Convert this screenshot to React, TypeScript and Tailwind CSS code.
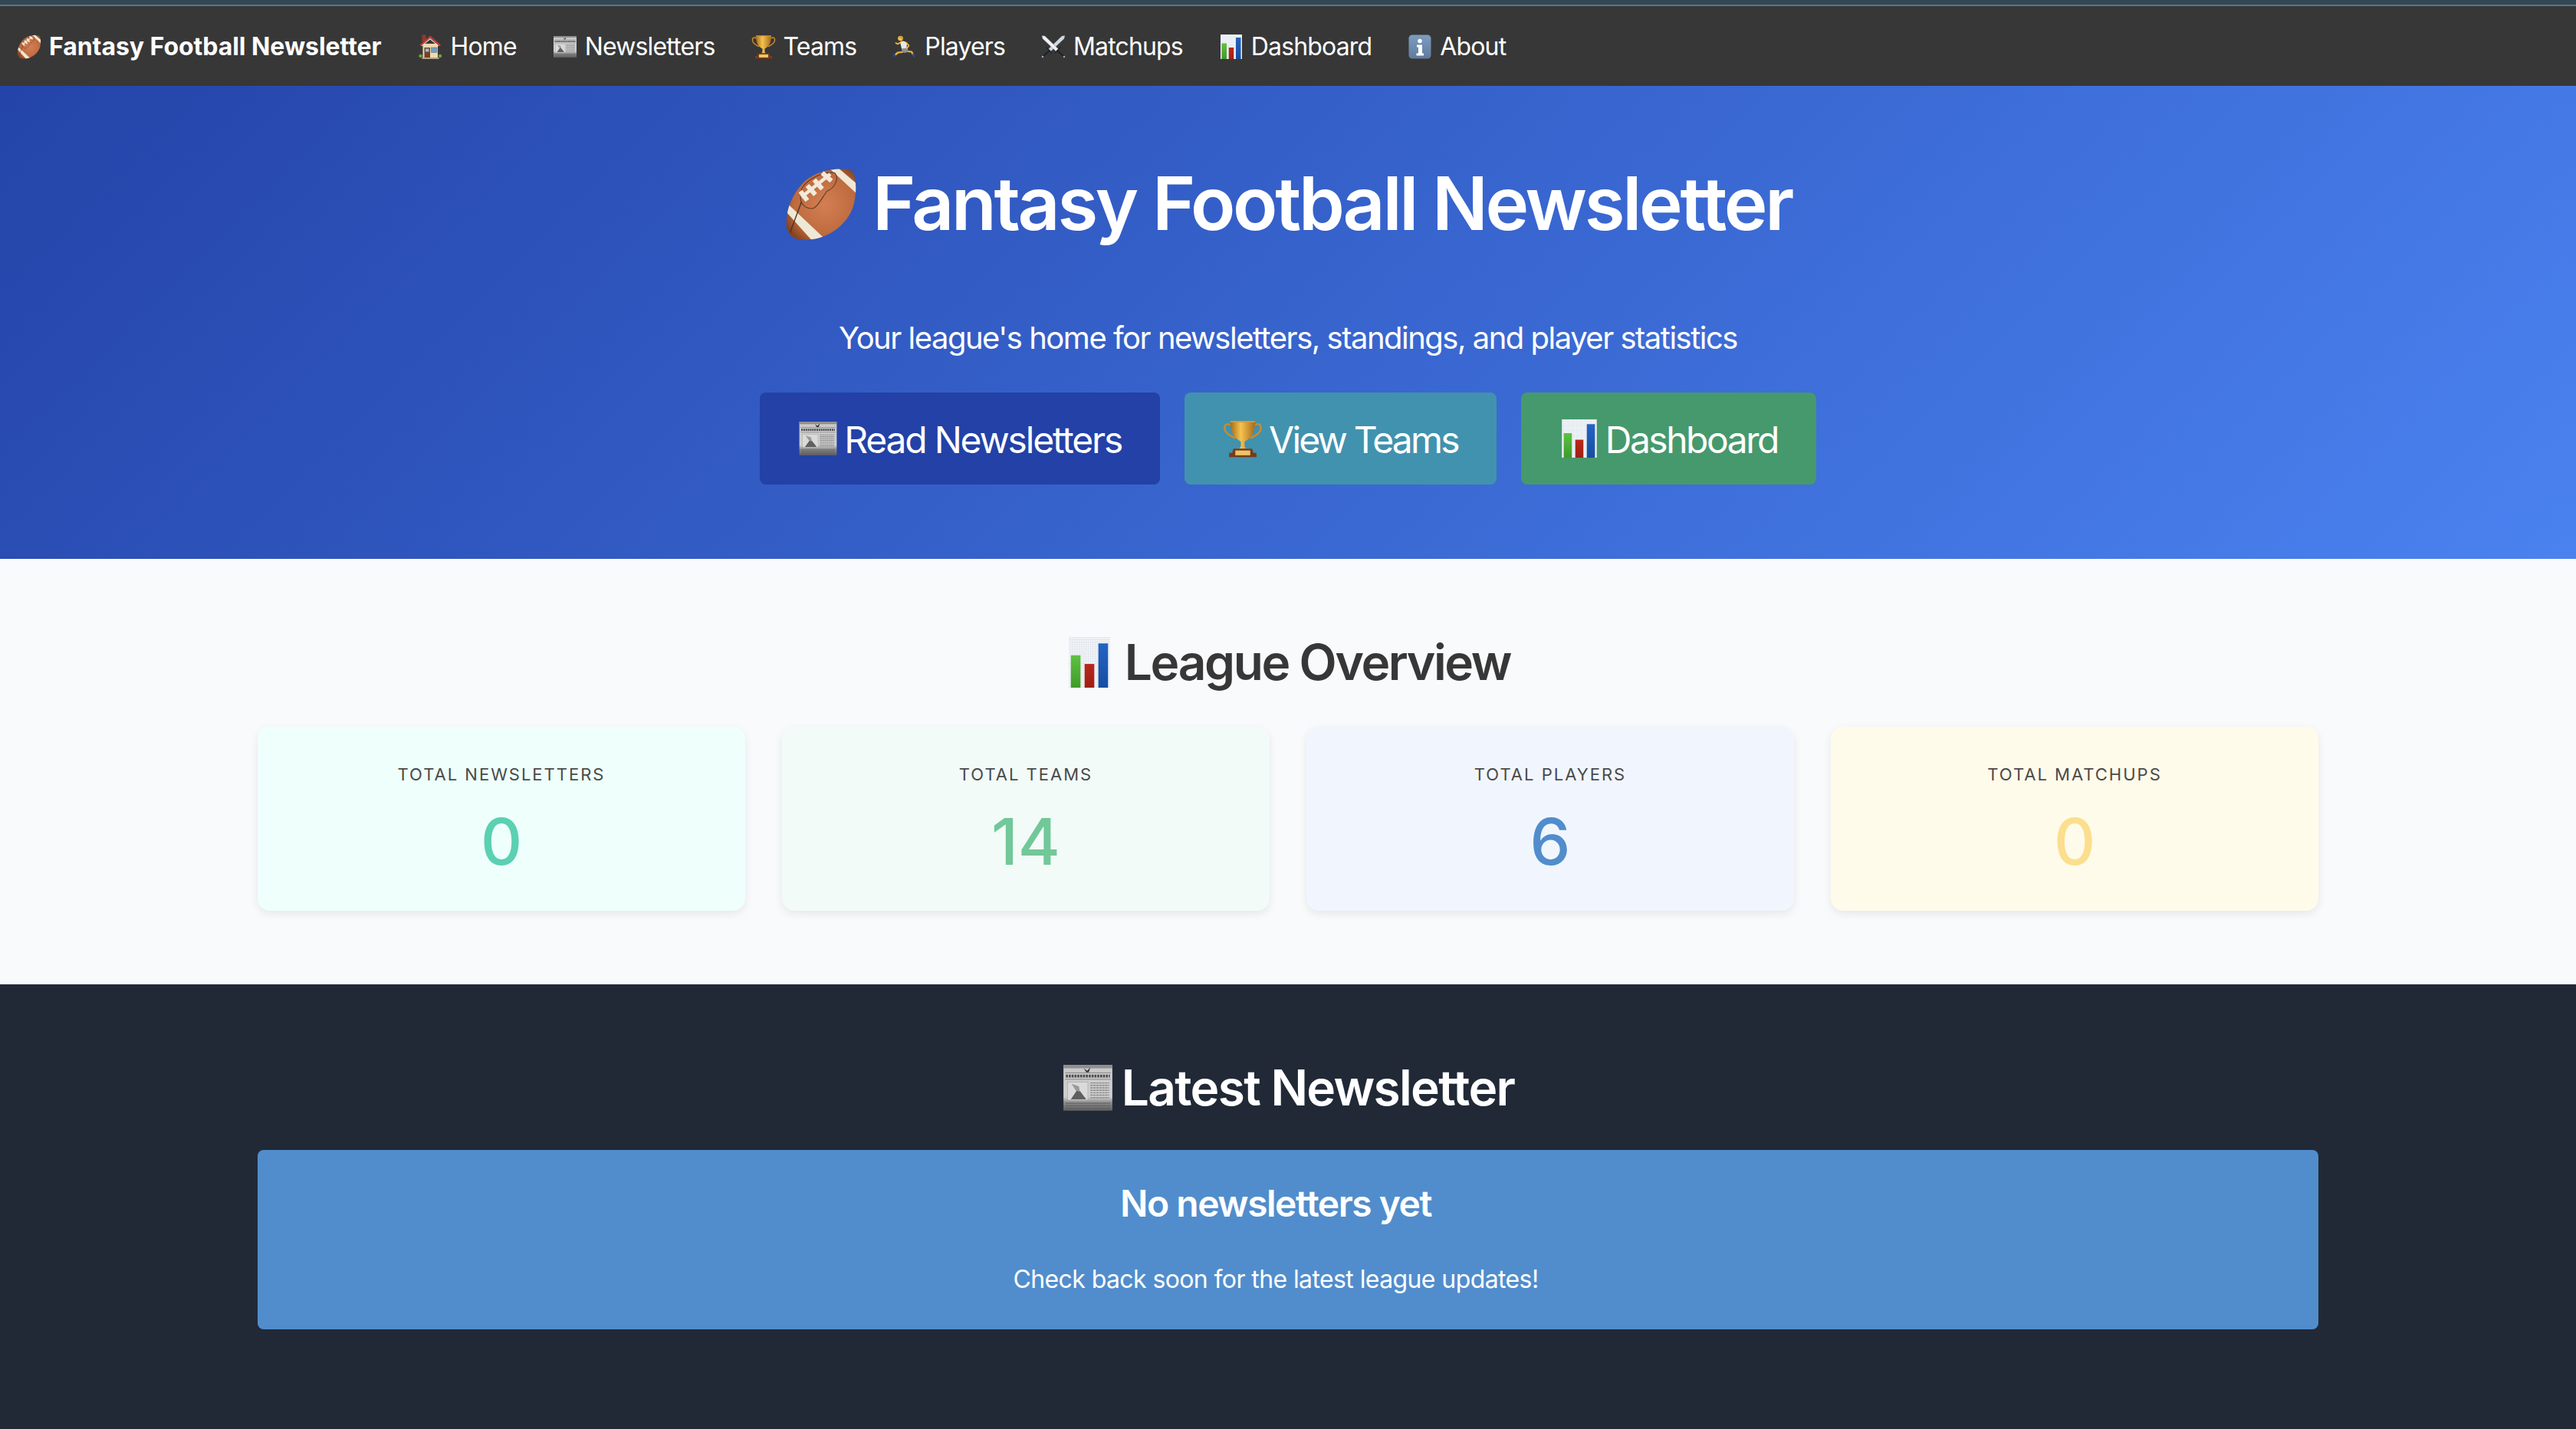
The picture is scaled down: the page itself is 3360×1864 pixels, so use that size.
import { useId, type ReactNode } from 'react'

type EmojiName = 'football' | 'house' | 'news' | 'trophy' | 'runner' | 'swords' | 'chart' | 'info'

function Glyph({ name, uid }: { name: EmojiName; uid: string }) {
  switch (name) {
    case 'football': {
      const shape = 'M58 3C62 5 64 20 60 34C55 50 38 62 22 63C12 64 4 62 2 52C1 38 6 24 18 12C30 2 48 0 58 3Z'
      return (
        <>
          <defs>
            <radialGradient id={`${uid}ball`} cx="0.55" cy="0.5" r="0.62">
              <stop offset="0" stopColor="#d37f53" />
              <stop offset="0.72" stopColor="#bd6a3e" />
              <stop offset="1" stopColor="#86441f" />
            </radialGradient>
            <clipPath id={`${uid}clip`}>
              <path d={shape} />
            </clipPath>
          </defs>
          <path d={shape} fill={`url(#${uid}ball)`} />
          <g clipPath={`url(#${uid}clip)`}>
            <path d="M38 0L46 0L66 17L66 26Z" fill="#efe8d6" />
            <path d="M0 29L0 37L26 66L37 64Z" fill="#efe8d6" />
          </g>
          <path d="M15 19C20 10 35 3 44 5C48 10 44 18 37 21C32 28 28 36 24 36C18 36 14 32 14 26Z" fill="none" stroke="#5d3a28" strokeWidth="0.7" />
          <path d="M40 6L15 26" stroke="#f1ead9" strokeWidth="3" />
          <path d="M33 5L41 12M26 11L33 19M20 16L27 24M14 21L20 29" stroke="#f1ead9" strokeWidth="4" />
          <path d="M15 30L5 57" stroke="#4a3226" strokeWidth="0.9" />
        </>
      )
    }
    case 'house':
      return (
        <>
          <circle cx="7" cy="56" r="4.500" fill="#6aa244" />
          <circle cx="58" cy="56" r="4.500" fill="#6aa244" />
          <rect x="11" y="1" width="10" height="18" fill="#8f3a30" />
          <rect x="13" y="24" width="39" height="37" fill="#efd9b0" />
          <path d="M32 3L5 27L8 31L32 10L56 31L60 27Z" fill="#b5413a" />
          <path d="M32 10L10 29V31L32 13L54 31V29Z" fill="#f5ead3" />
          <rect x="17" y="34" width="15" height="27" fill="#74402a" />
          <rect x="20" y="37" width="9" height="8" fill="#8ec3df" />
          <rect x="35" y="34" width="15" height="13" fill="#6aa0c8" stroke="#8a5a38" strokeWidth="1" />
          <rect x="11" y="60" width="44" height="4" fill="#b2a289" />
        </>
      )
    case 'news':
      return (
        <>
          <defs>
            <linearGradient id={`${uid}paper`} x1="0" y1="0" x2="0" y2="1">
              <stop offset="0" stopColor="#c9c9c9" />
              <stop offset="0.7" stopColor="#cfcfcf" />
              <stop offset="0.82" stopColor="#8d8d8d" />
              <stop offset="1" stopColor="#606060" />
            </linearGradient>
          </defs>
          <rect x="2" y="4" width="60" height="56" fill={`url(#${uid}paper)`} />
          <rect x="2" y="4" width="60" height="4" fill="#8f8f8f" />
          <path d="M27 8L31 11L35 7L33 13H30Z" fill="#333" />
          <path d="M4 13.500H60M4 21.500H60" stroke="#7a7a7a" strokeWidth="0.8" />
          <path d="M5 17.500H59" stroke="#4d4d4d" strokeWidth="3.500" strokeDasharray="2.500 1" />
          <rect x="7" y="25" width="25" height="22" fill="#dadada" stroke="#a3a3a3" strokeWidth="0.6" />
          <path d="M11 46L20 33L30 46Z" fill="#5f5f5f" />
          <path d="M12 27L21 30L22 37L17 35Z" fill="#9a9a9a" />
          <path d="M35 26H58M35 29H58M35 32H58M35 35H58M35 38H58M35 41H58M35 44H58" stroke="#8a8a8a" strokeWidth="1.400" strokeDasharray="3 0.6" />
          <path d="M5 51H59M5 54H59M5 57H59" stroke="#5a5a5a" strokeWidth="1.200" strokeDasharray="1.500 0.600" />
        </>
      )
    case 'trophy':
      return (
        <>
          <defs>
            <linearGradient id={`${uid}gold`} x1="0" y1="0" x2="1" y2="0">
              <stop offset="0" stopColor="#a86a16" />
              <stop offset="0.42" stopColor="#f4c350" />
              <stop offset="1" stopColor="#a9691a" />
            </linearGradient>
          </defs>
          <path d="M13 10C6 5 2 10 3 16C4 24 12 27 19 31M51 10C58 5 62 10 61 16C60 24 52 27 45 31" fill="none" stroke="#c98d2b" strokeWidth="3" strokeLinecap="round" />
          <path d="M12 3H52C52 18 48 31 35 37V44C35 46 37 48 38 49H26C27 48 29 46 29 44V37C16 31 12 18 12 3Z" fill={`url(#${uid}gold)`} />
          <path d="M12 3H52V5H12Z" fill="#d69c33" />
          <path d="M17 49H47L49 56H54V63H10V56H15Z" fill="#7b3a17" />
          <rect x="20" y="52" width="24" height="8" fill="#ecc468" />
        </>
      )
    case 'runner':
      return (
        <>
          <path d="M26 46L15 47L7 53" fill="none" stroke="#f1b93c" strokeWidth="4.500" strokeLinecap="round" strokeLinejoin="round" />
          <path d="M38 44L50 45L54 52" fill="none" stroke="#f1b93c" strokeWidth="4.500" strokeLinecap="round" strokeLinejoin="round" />
          <path d="M1 52L7 50L9 58L3 60Z" fill="#2a478c" />
          <path d="M52 50L57 49L60 59L55 60Z" fill="#2a478c" />
          <path d="M25 34L37 33L43 44L34 48L24 46Z" fill="#8f8f8f" />
          <path d="M20 19C26 15 34 18 38 22L37 35L24 37Z" fill="#e9e9e4" />
          <path d="M22 20L14 25L9 22" fill="none" stroke="#f1b93c" strokeWidth="3.500" strokeLinecap="round" strokeLinejoin="round" />
          <path d="M36 21L43 29L38 36" fill="none" stroke="#f1b93c" strokeWidth="3.500" strokeLinecap="round" strokeLinejoin="round" />
          <circle cx="21" cy="10" r="6.500" fill="#f3c24b" />
          <path d="M15 7C18 2 27 3 28 9C28 12 26 14 25 15C25 10 21 8 15 7Z" fill="#d89c2a" />
        </>
      )
    case 'swords':
      return (
        <>
          <path d="M62 3L60 11L25 44L19 38L54 4Z" fill="#cfd9e2" stroke="#6e7a85" strokeWidth="0.8" />
          <path d="M2 3L4 11L39 44L45 38L10 4Z" fill="#eef2f6" stroke="#6e7a85" strokeWidth="0.8" />
          <path d="M14 34L27 48M50 34L37 48" stroke="#26282b" strokeWidth="3.500" strokeLinecap="round" />
          <path d="M22 42L6 56M42 42L58 56" stroke="#1f2124" strokeWidth="3.500" strokeLinecap="round" />
          <circle cx="4" cy="58" r="2.500" fill="#a9a9a9" />
          <circle cx="60" cy="58" r="2.500" fill="#a9a9a9" />
        </>
      )
    case 'chart':
      return (
        <>
          <defs>
            <pattern id={`${uid}grid`} width="3" height="3" patternUnits="userSpaceOnUse">
              <rect width="3" height="3" fill="#f2f5f8" />
              <path d="M3 0H0V3" fill="none" stroke="#bfcbd8" strokeWidth="0.5" />
            </pattern>
            <linearGradient id={`${uid}g`} x1="0" y1="0" x2="0" y2="1">
              <stop offset="0" stopColor="#5cc240" />
              <stop offset="1" stopColor="#409a2b" />
            </linearGradient>
            <linearGradient id={`${uid}r`} x1="0" y1="0" x2="0" y2="1">
              <stop offset="0" stopColor="#b9281b" />
              <stop offset="1" stopColor="#9d2013" />
            </linearGradient>
            <linearGradient id={`${uid}b`} x1="0" y1="0" x2="0" y2="1">
              <stop offset="0" stopColor="#2463c4" />
              <stop offset="1" stopColor="#164e9f" />
            </linearGradient>
          </defs>
          <rect x="4" y="0" width="56" height="64" fill={`url(#${uid}grid)`} />
          <rect x="7" y="23" width="13" height="41" fill={`url(#${uid}g)`} />
          <rect x="25.500" y="34" width="13" height="30" fill={`url(#${uid}r)`} />
          <rect x="44" y="8" width="13" height="56" fill={`url(#${uid}b)`} />
        </>
      )
    case 'info':
      return (
        <>
          <defs>
            <linearGradient id={`${uid}info`} x1="0" y1="0" x2="0" y2="1">
              <stop offset="0" stopColor="#7d9dc0" />
              <stop offset="1" stopColor="#5f7b9c" />
            </linearGradient>
          </defs>
          <rect x="3" y="1" width="58" height="62" rx="9" fill={`url(#${uid}info)`} />
          <circle cx="32" cy="17" r="5.500" fill="#fff" />
          <path d="M24 27H38V49H42V55H23V49H28V33H24Z" fill="#fff" />
        </>
      )
  }
}

function Emoji({ name, size }: { name: EmojiName; size: string }) {
  const uid = useId()
  return (
    <svg viewBox="0 0 64 64" preserveAspectRatio="none" className={`${size} shrink-0`} aria-hidden>
      <Glyph name={name} uid={uid} />
    </svg>
  )
}

const navLinks: { label: string; icon: EmojiName }[] = [
  { label: 'Home', icon: 'house' },
  { label: 'Newsletters', icon: 'news' },
  { label: 'Teams', icon: 'trophy' },
  { label: 'Players', icon: 'runner' },
  { label: 'Matchups', icon: 'swords' },
  { label: 'Dashboard', icon: 'chart' },
  { label: 'About', icon: 'info' },
]

const stats = [
  { label: 'Total Newsletters', value: '0', card: 'bg-[#eefffc]', text: 'text-[#5bd0b2]' },
  { label: 'Total Teams', value: '14', card: 'bg-[#f2fbf8]', text: 'text-[#71c899]' },
  { label: 'Total Players', value: '6', card: 'bg-[#f1f6fe]', text: 'text-[#518dcc]' },
  { label: 'Total Matchups', value: '0', card: 'bg-[#fffbeb]', text: 'text-[#fbdf8e]' },
]

function HeroButton({ icon, className, children }: { icon: EmojiName; className: string; children: ReactNode }) {
  return (
    <a className={`flex h-[120px] items-center gap-[8px] rounded-[8px] px-[50px] text-[48px] text-white ${className}`}>
      <Emoji name={icon} size="h-[50px] w-[52px]" />
      <span className="pt-[3px]">{children}</span>
    </a>
  )
}

export default function App() {
  return (
    <div className="min-h-[1864px] bg-[#212937] font-['Inter',sans-serif]">
      <div className="h-[6px] bg-[#334855]" />
      <div className="h-[2px] bg-[#5f7681]" />
      <nav className="flex h-[104px] items-center bg-[#373737] pt-[1px] pl-[22px] text-[32px] tracking-[-0.85px] text-white">
        <a className="flex items-center gap-[10px] font-bold tracking-[-0.05px]">
          <Emoji name="football" size="h-[32px] w-[32px]" />
          Fantasy Football Newsletter
        </a>
        <ul className="ml-[48px] flex items-center gap-[47px]">
          {navLinks.map((link) => (
            <li key={link.label} className="flex items-center gap-[10px]">
              <Emoji name={link.icon} size="h-[32px] w-[32px]" />
              {link.label}
            </li>
          ))}
        </ul>
      </nav>

      <section className="flex flex-col items-center bg-[linear-gradient(135deg,#2444a9,#4a82f0)] pt-[96px] pb-[97px] text-white">
        <h1 className="mb-[86px] flex items-center gap-[19px] text-[96px] leading-[115px] font-semibold tracking-[-3.3px]">
          <Emoji name="football" size="h-[96px] w-[96px]" />
          Fantasy Football Newsletter
        </h1>
        <p className="mb-[39px] text-[40px] leading-[64px] tracking-[-1.5px]">
          Your league's home for newsletters, standings, and player statistics
        </p>
        <div className="flex gap-[32px]">
          <HeroButton icon="news" className="bg-[#2341a6] tracking-[-2.2px]">Read Newsletters</HeroButton>
          <HeroButton icon="trophy" className="bg-[#4192ae] tracking-[-2.8px]">View Teams</HeroButton>
          <HeroButton icon="chart" className="bg-[#46996c] tracking-[-2.5px]">Dashboard</HeroButton>
        </div>
      </section>

      <section className="bg-[#f9fafc] py-[96px]">
        <h2 className="mb-[46px] flex items-center justify-center gap-[15px] text-[64px] leading-[77px] font-semibold tracking-[-2.4px] text-[#373737]">
          <Emoji name="chart" size="h-[66px] w-[62px]" />
          League Overview
        </h2>
        <div className="mx-auto grid w-[2688px] grid-cols-4 gap-[48px]">
          {stats.map((stat) => (
            <div key={stat.label} className={`flex h-[240px] flex-col items-center rounded-[16px] pt-[48px] shadow-[0_4px_12px_rgba(0,0,0,0.08)] ${stat.card}`}>
              <div className="text-[22px] leading-[28px] tracking-[2px] text-[#4a4a4a] uppercase">{stat.label}</div>
              <div className={`mt-[24px] text-[84px] leading-[100px] font-medium ${stat.text}`}>{stat.value}</div>
            </div>
          ))}
        </div>
      </section>

      <section className="pt-[96px] text-white">
        <h2 className="mb-[43px] flex items-center justify-center gap-[10px] text-[64px] leading-[77px] font-semibold tracking-[-1.7px]">
          <Emoji name="news" size="h-[68px] w-[68px]" />
          Latest Newsletter
        </h2>
        <div className="mx-auto flex h-[234px] w-[2688px] flex-col items-center rounded-[8px] bg-[#518dcc] pt-[40px] pr-[32px]">
          <h3 className="text-[48px] leading-[60px] font-semibold tracking-[-1.5px]">No newsletters yet</h3>
          <p className="mt-[43px] text-[32px] leading-[51px] tracking-[-0.6px]">Check back soon for the latest league updates!</p>
        </div>
      </section>
    </div>
  )
}
